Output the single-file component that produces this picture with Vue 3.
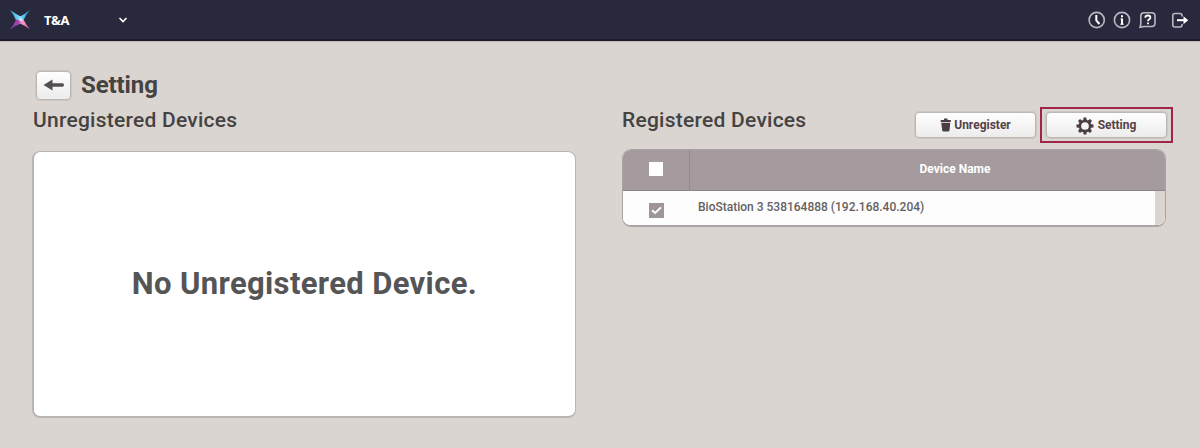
<script setup>
const devices = [{ name: 'BioStation 3 538164888 (192.168.40.204)', checked: true }]
const teeth = [0, 45, 90, 135, 180, 225, 270, 315]
</script>

<template>
  <div class="page">
    <header class="topbar">
      <svg class="logo" width="22" height="22" viewBox="0 0 22 22">
        <defs>
          <linearGradient id="lgTop" x1="0" y1="0" x2="1" y2="0">
            <stop offset="0" stop-color="#2fa9e0" /><stop offset=".5" stop-color="#7be0fa" /><stop offset="1" stop-color="#0d8fd8" />
          </linearGradient>
          <linearGradient id="lgBottom" x1="0" y1="0" x2="1" y2="0">
            <stop offset="0" stop-color="#6a4aa5" /><stop offset=".42" stop-color="#a83fae" /><stop offset=".6" stop-color="#f4a0c8" /><stop offset="1" stop-color="#e0569b" />
          </linearGradient>
        </defs>
        <path d="M1 1Q7.500 5.500 11.500 7.200Q16 5 21 1Q16.500 6 14.600 11L11 11.500L7 11Q5 6 1 1Z" fill="url(#lgTop)" />
        <path d="M7 10.800L11 10.200L14.600 10.800Q17 15.500 21 20.500Q16 16.500 11.500 14.800Q6.500 16.500 1 20.500Q5 15.500 7 10.800Z" fill="url(#lgBottom)" />
        <path d="M9 10.500L12 8.500L14 11L11.500 12.500Z" fill="#e3f7ff" opacity=".7" />
      </svg>
      <span class="product">T&amp;A</span>
      <svg class="chevron" width="10" height="8" viewBox="0 0 10 8"><path d="M1.500 2L5 5.500L8.500 2" fill="none" stroke="#fff" stroke-width="1.600" /></svg>
      <nav class="tools">
        <svg width="18" height="18" viewBox="0 0 18 18" fill="none"><circle cx="8.700" cy="9" r="7.600" stroke="#b9b9c2" stroke-width="1.600" /><path d="M8.300 4V9.300L11.400 13" stroke="#fff" stroke-width="2" /></svg>
        <svg width="18" height="18" viewBox="0 0 18 18" fill="none"><circle cx="9" cy="9" r="7.600" stroke="#b9b9c2" stroke-width="1.600" /><path d="M9 4.300V6.300M9 7.600V13.600" stroke="#fff" stroke-width="2" /><path d="M7.500 8H9M7.300 13.200H10.700" stroke="#fff" stroke-width="1" /></svg>
        <svg width="18" height="18" viewBox="0 0 18 18" fill="none"><path d="M1 16.300L1.800 13.500V5Q1.800 1.700 5 1.700H12.700Q16 1.700 16 5V12Q16 15.500 12.700 15.500H5L1 16.300Z" stroke="#b9b9c2" stroke-width="1.600" /><path d="M6.300 6.700Q6.300 4.500 8.900 4.500Q11.400 4.500 11.400 6.500Q11.400 7.800 9.900 8.500Q9 9 9 10.300M9 11.500V13.300" stroke="#fff" stroke-width="1.800" /></svg>
        <svg class="exit" width="18" height="18" viewBox="0 0 18 18" fill="none"><path d="M11 5.500V4.500Q11 2.500 9 2.500H4Q1.800 2.500 1.800 4.500V14Q1.800 16 4 16H9Q11 16 11 14V13" stroke="#b9b9c2" stroke-width="1.600" /><path d="M6 9.200H14.500" stroke="#fff" stroke-width="2" /><path d="M12.500 5.200L17.200 9.200L12.500 13.200Z" fill="#fff" /></svg>
      </nav>
    </header>

    <main class="content">
      <div class="title-row">
        <button class="btn back">
          <svg width="22" height="12" viewBox="0 0 22 12"><path d="M.500 6L9.500 .500V4.200H19.500Q21 4.200 21 6Q21 7.800 19.500 7.800H9.500V11.500Z" fill="#555050" /></svg>
        </button>
        <h1>Setting</h1>
      </div>
      <div class="columns">
        <section class="unregistered">
          <h2>Unregistered Devices</h2>
          <div class="empty"><span>No Unregistered Device.</span></div>
        </section>
        <section class="registered">
          <div class="section-head">
            <h2>Registered Devices</h2>
            <div class="actions">
              <button class="btn action">
                <svg width="12" height="14" viewBox="0 0 12 14" fill="#4a3e42"><path d="M.700 2H4V.500H7.500V2H10.800V4H.700ZM1.200 4.800H10.300L9.500 12.300Q9.400 13.500 8.200 13.500H3.500Q2.300 13.500 2.200 12.300Z" /></svg>
                <span>Unregister</span>
              </button>
              <div class="highlight">
                <button class="btn action">
                  <svg class="gear" width="18" height="18" viewBox="-9 -9 18 18"><circle r="5.100" fill="none" stroke="#4a3e42" stroke-width="2.500" /><path v-for="a in teeth" :key="a" d="M-1.800 -5.500L-1.400 -8.500H1.400L1.800 -5.500Z" fill="#4a3e42" :transform="`rotate(${a})`" /></svg>
                  <span>Setting</span>
                </button>
              </div>
            </div>
          </div>
          <div class="table">
            <div class="thead">
              <div class="check-cell"><i class="box"></i></div>
              <div class="name-head">Device Name</div>
            </div>
            <div v-for="d in devices" :key="d.name" class="row">
              <div class="check-cell"><i class="box" :class="{ checked: d.checked }"><svg v-if="d.checked" width="11" height="9" viewBox="0 0 11 9"><path d="M1 4.200L4.200 7L10 1.400" fill="none" stroke="#fff" stroke-width="2" /></svg></i></div>
              <div class="name">{{ d.name }}</div>
              <div class="gutter"></div>
            </div>
          </div>
        </section>
      </div>
    </main>
  </div>
</template>

<style>
body { margin: 0; overflow: hidden; }
</style>

<style scoped>
* { box-sizing: border-box; }
.page { width: 1200px; height: 448px; background: #dbd5d1; font-family: Roboto, "Liberation Sans", sans-serif; color: #454343; }
.topbar { height: 41px; background: #28293c; border-bottom: 2px solid #1b1b2d; box-shadow: 0 1px 1px #c5bebb; display: flex; align-items: center; padding: 0 11px 0 9px; }
.logo { margin-top: 1px; }
.product { margin-left: 13px; width: 74px; font: 700 13px "Noto Sans", sans-serif; letter-spacing: -.2px; color: #fff; }
.chevron { margin-top: 1px; }
.tools { margin-left: auto; display: flex; gap: 7.500px; }
.tools .exit { margin-left: 7px; }
.content { padding: 29px 28px 0 32px; }
.title-row { display: flex; height: 31px; align-items: center; padding-left: 3px; }
.btn { display: flex; align-items: center; justify-content: center; border: 1px solid #bcb7b5; box-shadow: 0 0 0 1px #cdc7c4; border-radius: 4px; background: linear-gradient(#fefefe, #ececec); padding: 0; font-family: inherit; }
.back { width: 35px; height: 29px; margin: -1px 0 0 1px; }
h1 { margin: -2px 0 0 10px; font-size: 24px; line-height: 30px; font-weight: 700; letter-spacing: -.1px; color: #454342; }
h2 { margin: 0; font-size: 21px; line-height: 24px; font-weight: 500; letter-spacing: .25px; color: #454342; white-space: nowrap; }
.columns { display: flex; gap: 46px; }
.unregistered { flex: none; width: 544px; padding-top: 7px; }
.unregistered h2 { padding-left: 1px; }
.empty { margin-top: 19px; height: 267px; border: 1px solid #bab5b3; border-width: 1px 1px 2px 2px; border-radius: 8px; background: #fff; display: flex; align-items: center; justify-content: center; font-size: 31px; letter-spacing: .35px; font-weight: 700; color: #555; white-space: nowrap; }
.empty span { margin-top: -2px; }
.registered { flex: none; width: 551px; }
.section-head { display: flex; justify-content: space-between; height: 48px; padding-top: 6px; }
.section-head h2 { padding-top: 1px; }
.actions { display: flex; gap: 4px; }
.actions > .action { margin-top: 5px; }
.action { width: 121px; height: 26px; font-size: 12px; font-weight: 700; color: #544247; gap: 2px; }
.highlight { width: 133px; height: 36px; border: 2px solid #a1254b; padding: 3px 0 0 3.500px; }
.gear { margin-top: 1px; }
.gear + span { margin-left: 2px; }
.table { width: 544px; height: 78px; border: 1px solid #aaa2a4; border-bottom: 2px solid #aaa2a4; border-radius: 9px; background: #fff; overflow: hidden; }
.thead { display: flex; height: 41px; background: #a59b9f; border-bottom: 1px solid #8f8487; color: #fff; }
.check-cell { width: 67px; display: flex; align-items: center; justify-content: center; }
.thead .check-cell { border-right: 1px solid #948a8e; padding-bottom: 2px; }
.name-head { flex: 1; font-size: 12px; font-weight: 700; text-align: center; line-height: 38px; padding-left: 55px; }
.row { display: flex; height: 34px; background: #fdfdfd; }
.row .check-cell { padding-top: 4px; }
.box { width: 14px; height: 14px; background: #fff; display: flex; align-items: center; justify-content: center; }
.box.checked { width: 15px; height: 15px; background: #a0969a; }
.name { flex: 1; padding-left: 8px; font-size: 12px; font-weight: 500; line-height: 33px; color: #656162; }
.gutter { width: 10px; background: #dbd5d1; }
</style>
